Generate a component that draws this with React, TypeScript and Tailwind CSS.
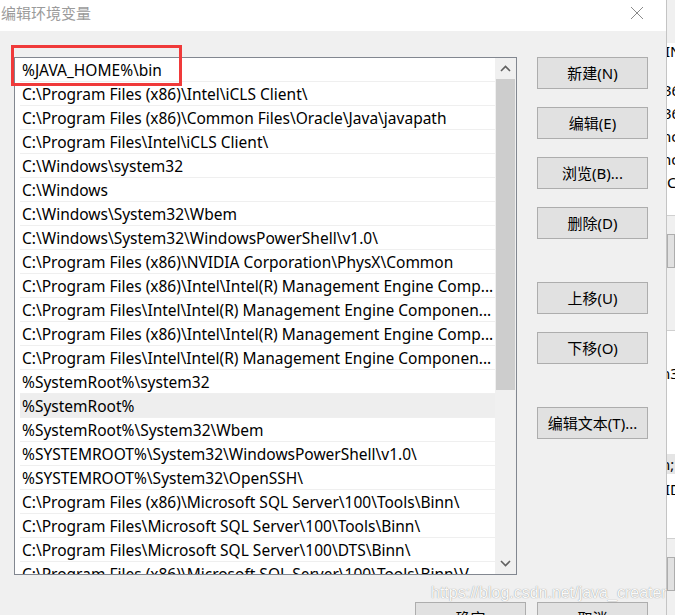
import React from "react";

const paths: string[] = [
  "%JAVA_HOME%\\bin",
  "C:\\Program Files (x86)\\Intel\\iCLS Client\\",
  "C:\\Program Files (x86)\\Common Files\\Oracle\\Java\\javapath",
  "C:\\Program Files\\Intel\\iCLS Client\\",
  "C:\\Windows\\system32",
  "C:\\Windows",
  "C:\\Windows\\System32\\Wbem",
  "C:\\Windows\\System32\\WindowsPowerShell\\v1.0\\",
  "C:\\Program Files (x86)\\NVIDIA Corporation\\PhysX\\Common",
  "C:\\Program Files (x86)\\Intel\\Intel(R) Management Engine Comp...",
  "C:\\Program Files\\Intel\\Intel(R) Management Engine Componen...",
  "C:\\Program Files (x86)\\Intel\\Intel(R) Management Engine Comp...",
  "C:\\Program Files\\Intel\\Intel(R) Management Engine Componen...",
  "%SystemRoot%\\system32",
  "%SystemRoot%",
  "%SystemRoot%\\System32\\Wbem",
  "%SYSTEMROOT%\\System32\\WindowsPowerShell\\v1.0\\",
  "%SYSTEMROOT%\\System32\\OpenSSH\\",
  "C:\\Program Files (x86)\\Microsoft SQL Server\\100\\Tools\\Binn\\",
  "C:\\Program Files\\Microsoft SQL Server\\100\\Tools\\Binn\\",
  "C:\\Program Files\\Microsoft SQL Server\\100\\DTS\\Binn\\",
  "C:\\Program Files (x86)\\Microsoft SQL Server\\100\\Tools\\Binn\\V...",
];

const HOVER_INDEX = 14;

const font = "font-['Noto_Sans','Noto_Sans_CJK_SC',sans-serif]";

const DlgButton: React.FC<{ label: string; className?: string }> = ({ label, className }) => (
  <button
    type="button"
    className={`w-[111px] h-[32px] shrink-0 border border-[#adadad] bg-[#e1e1e1] text-[15px] text-black leading-none ${className ?? ""}`}
  >
    {label}
  </button>
);

const Chevron: React.FC<{ up?: boolean }> = ({ up }) => (
  <svg width="11" height="7" viewBox="0 0 11 7" fill="none">
    <path
      d={up ? "M1 6 L5.5 1.5 L10 6" : "M1 1 L5.5 5.5 L10 1"}
      stroke="#606060"
      strokeWidth="1.6"
    />
  </svg>
);

export default function App() {
  return (
    <div className={`w-[675px] h-[615px] overflow-hidden flex bg-[#f0f0f0] ${font}`}>
      {/* dialog */}
      <div className="w-[667px] h-full flex flex-col border-r border-[#c4c4c4] shrink-0">
        <div className="h-[31px] bg-white flex items-center justify-between pl-[1px] pr-[22px] shrink-0">
          <span className="text-[15px] text-[#9b9b9b] leading-none -mt-[5px]">编辑环境变量</span>
          <svg width="14" height="14" viewBox="0 0 14 14" className="-mt-[6px]">
            <path d="M1 1 L13 13 M13 1 L1 13" stroke="#8a8a8a" strokeWidth="1" />
          </svg>
        </div>

        <div className="relative flex-1 flex flex-col pt-[26px] pl-[14px] pr-[18px]">
          <div className="flex gap-[20px]">
            {/* list box */}
            <div className="w-[503px] h-[518px] shrink-0 border border-[#828790] bg-white flex overflow-hidden">
              <div className="flex-1 pl-[5px] overflow-hidden">
                {paths.map((p, i) => (
                  <div
                    key={i}
                    className={`h-[24px] flex items-center pl-[2px] pt-[2px] border-b border-[#efefef] text-[15.5px] text-black whitespace-nowrap overflow-hidden ${
                      i === HOVER_INDEX ? "bg-[#eeeeee]" : ""
                    }`}
                  >
                    {p}
                  </div>
                ))}
              </div>
              <div className="w-[21px] shrink-0 bg-[#f0f0f0] flex flex-col items-center">
                <div className="h-[21px] w-full flex items-center justify-center">
                  <Chevron up />
                </div>
                <div className="h-[311px] w-[19px] bg-[#cdcdcd]" />
                <div className="flex-1" />
                <div className="h-[22px] w-full flex items-center justify-center">
                  <Chevron />
                </div>
              </div>
            </div>

            {/* side buttons */}
            <div className="flex flex-col">
              <DlgButton label="新建(N)" />
              <DlgButton label="编辑(E)" className="mt-[18px]" />
              <DlgButton label="浏览(B)..." className="mt-[18px]" />
              <DlgButton label="删除(D)" className="mt-[18px]" />
              <DlgButton label="上移(U)" className="mt-[43px]" />
              <DlgButton label="下移(O)" className="mt-[18px]" />
              <DlgButton label="编辑文本(T)..." className="mt-[43px]" />
            </div>
          </div>

          {/* bottom buttons */}
          <div className="flex justify-end gap-[11px] mt-[27px]">
            <DlgButton label="确定" className="flex justify-center items-start pt-[8px]" />
            <DlgButton label="取消" className="flex justify-center items-start pt-[8px]" />
          </div>

          {/* annotation + watermark overlays */}
          <div className="absolute left-[11px] top-[14px] w-[171px] h-[41px] border-[3px] border-[#f03a3a] pointer-events-none" />
          <span className="absolute left-[431px] top-[554px] text-[16px] font-['Liberation_Sans',sans-serif] text-[#fafafa] [text-shadow:0_0_1px_#7c7c7c] leading-none whitespace-nowrap">
            https://blog.csdn.net/java_creater
          </span>
        </div>
      </div>

      {/* window behind, visible at the edge */}
      <div className="flex-1 flex flex-col overflow-hidden text-[15px] text-black whitespace-nowrap leading-none">
        <div className="h-[43px] bg-[#f0f0f0]" />
        <div className="h-[172px] bg-white flex flex-col gap-[8px] pt-[1px]">
          <span className="-ml-[2px]">IN</span>
          <span className="mt-[16px] -ml-[4px]">36</span>
          <span className="-ml-[4px]">36</span>
          <span className="-ml-[5px]">nc</span>
          <span className="-ml-[5px]">nc</span>
          <span>C:</span>
        </div>
        <div className="h-[115px] border-t border-[#d0d0d0] bg-[#f0f0f0] pt-[18px]">
          <div className="h-[34px] border border-[#adadad] bg-[#e1e1e1]" />
        </div>
        <div className="h-[208px] border-t border-[#d0d0d0] bg-white flex flex-col">
          <span className="mt-[35px] -ml-[6px]">n3</span>
          <span className="mt-[73px] h-[20px] bg-[#e5e5e5] flex items-center -ml-[6px]">n;</span>
          <span className="mt-[8px] -ml-[2px]">ID</span>
        </div>
        <div className="flex-1 border-t border-[#d0d0d0] bg-[#f0f0f0] pt-[18px]">
          <div className="h-[34px] border border-[#adadad] bg-[#e1e1e1]" />
        </div>
      </div>
    </div>
  );
}
